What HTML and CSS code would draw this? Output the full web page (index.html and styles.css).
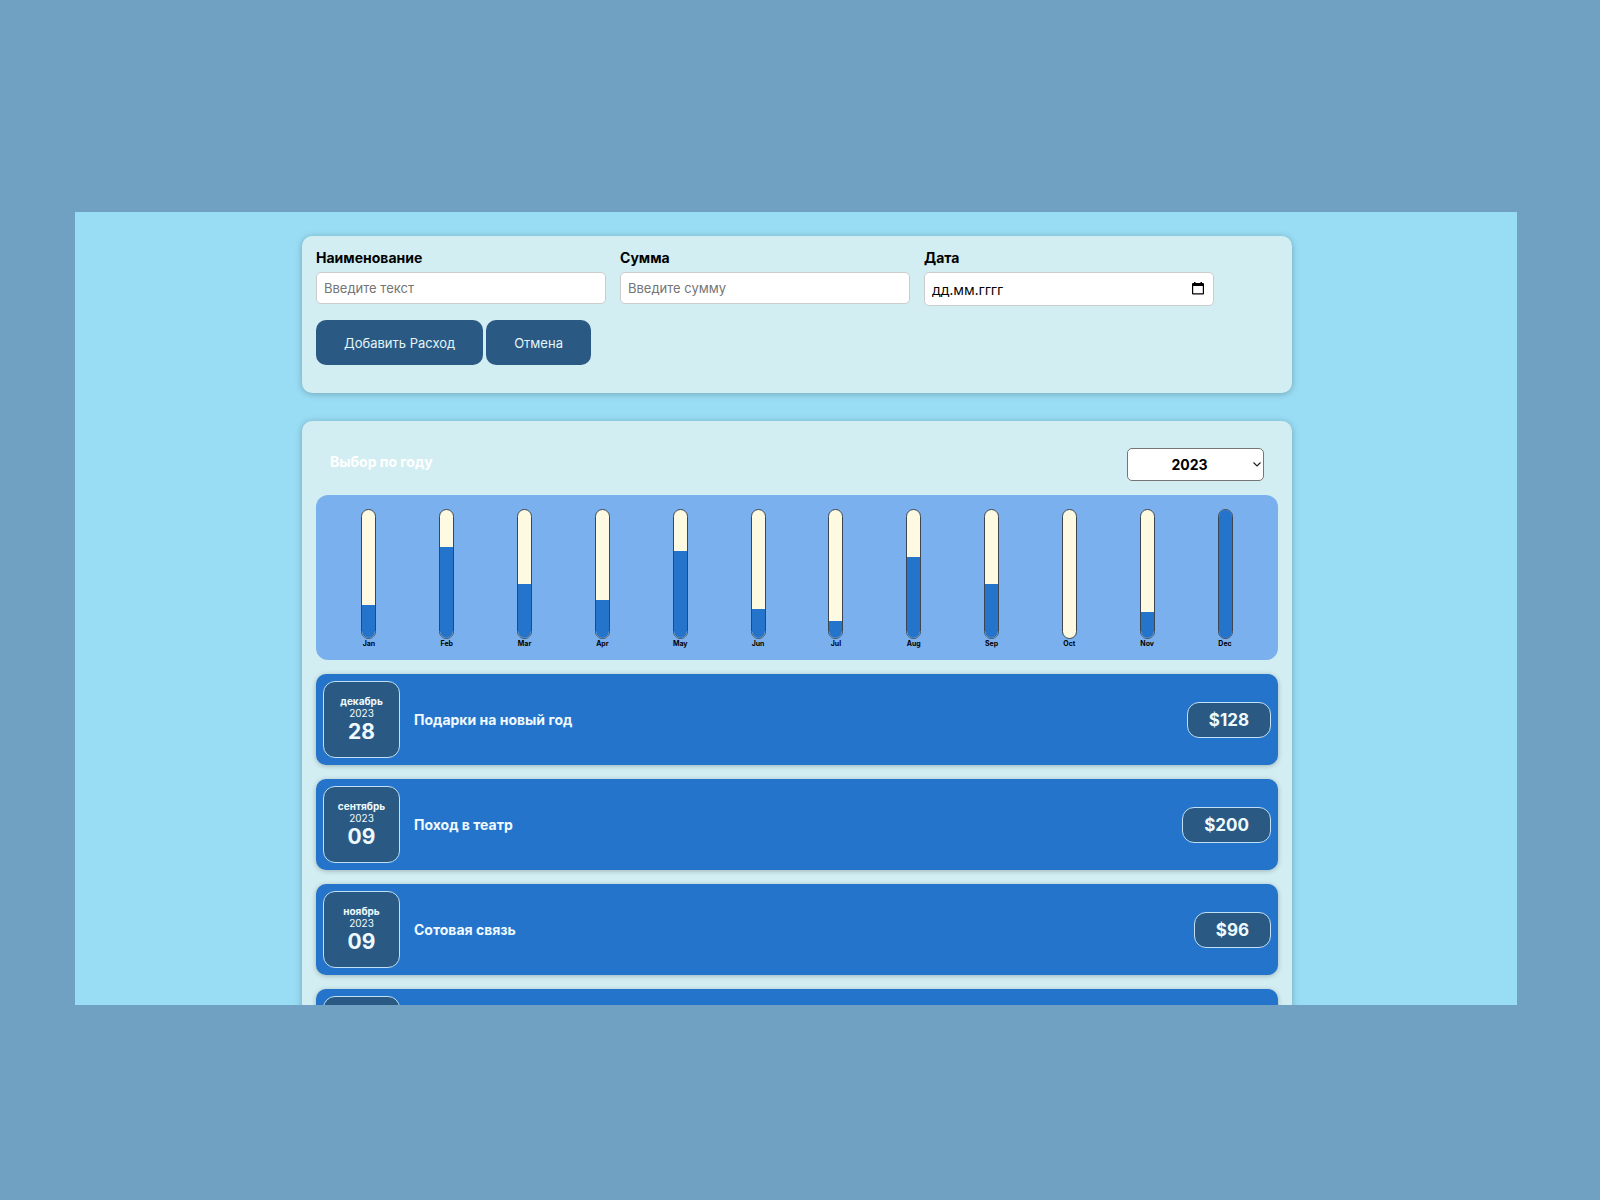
FILE: index.html
```
<!DOCTYPE html>
<html lang="ru">
<head>
  <meta charset="UTF-8">
  <title>Расходы</title>
  <link rel="stylesheet" href="styles.css">
</head>
<body>
  <div class="app">
    <form class="card new-cost">
      <div class="new-cost-controls">
        <div class="control">
          <label for="name">Наименование</label>
          <input type="text" id="name" placeholder="Введите текст">
        </div>
        <div class="control">
          <label for="amount">Сумма</label>
          <input type="text" id="amount" placeholder="Введите сумму">
        </div>
        <div class="control">
          <label for="date">Дата</label>
          <div class="date-field">
            <input type="text" id="date" class="date-input" placeholder="дд.мм.гггг">
            <svg class="calendar" viewBox="0 0 12 13" width="12" height="13">
              <path d="M2 0h1.500v1h5V0H10v1h1a1 1 0 0 1 1 1v9.500a1 1 0 0 1-1 1H1a1 1 0 0 1-1-1V2a1 1 0 0 1 1-1h1zM1.200 4v7.300h9.600V4z"/>
            </svg>
          </div>
        </div>
      </div>
      <div class="actions">
        <button type="submit">Добавить Расход</button>
        <button type="button">Отмена</button>
      </div>
    </form>

    <div class="card costs">
      <div class="filter">
        <label for="year">Выбор по году</label>
        <div class="select-field">
          <select id="year">
            <option>2024</option>
            <option selected>2023</option>
            <option>2022</option>
            <option>2021</option>
          </select>
          <svg class="arrow" viewBox="0 0 8 5" width="8" height="5">
            <path d="M.5.500l3.500 3.500 3.500-3.500" fill="none" stroke="#222" stroke-width="1.200"/>
          </svg>
        </div>
      </div>

      <div class="diagram">
        <div class="bar"><div class="bar-inner"><div class="bar-fill" style="height: 26%"></div></div><div class="bar-label">Jan</div></div>
        <div class="bar"><div class="bar-inner"><div class="bar-fill" style="height: 71%"></div></div><div class="bar-label">Feb</div></div>
        <div class="bar"><div class="bar-inner"><div class="bar-fill" style="height: 42%"></div></div><div class="bar-label">Mar</div></div>
        <div class="bar"><div class="bar-inner"><div class="bar-fill" style="height: 30%"></div></div><div class="bar-label">Apr</div></div>
        <div class="bar"><div class="bar-inner"><div class="bar-fill" style="height: 68%"></div></div><div class="bar-label">May</div></div>
        <div class="bar"><div class="bar-inner"><div class="bar-fill" style="height: 23%"></div></div><div class="bar-label">Jun</div></div>
        <div class="bar"><div class="bar-inner"><div class="bar-fill" style="height: 13%"></div></div><div class="bar-label">Jul</div></div>
        <div class="bar"><div class="bar-inner"><div class="bar-fill" style="height: 63%"></div></div><div class="bar-label">Aug</div></div>
        <div class="bar"><div class="bar-inner"><div class="bar-fill" style="height: 42%"></div></div><div class="bar-label">Sep</div></div>
        <div class="bar"><div class="bar-inner"><div class="bar-fill" style="height: 0%"></div></div><div class="bar-label">Oct</div></div>
        <div class="bar"><div class="bar-inner"><div class="bar-fill" style="height: 20%"></div></div><div class="bar-label">Nov</div></div>
        <div class="bar"><div class="bar-inner"><div class="bar-fill" style="height: 100%"></div></div><div class="bar-label">Dec</div></div>
      </div>

      <ul class="cost-list">
        <li class="cost-item">
          <div class="cost-date">
            <div class="month">декабрь</div>
            <div class="year">2023</div>
            <div class="day">28</div>
          </div>
          <h2>Подарки на новый год</h2>
          <div class="price">$128</div>
        </li>
        <li class="cost-item">
          <div class="cost-date">
            <div class="month">сентябрь</div>
            <div class="year">2023</div>
            <div class="day">09</div>
          </div>
          <h2>Поход в театр</h2>
          <div class="price">$200</div>
        </li>
        <li class="cost-item">
          <div class="cost-date">
            <div class="month">ноябрь</div>
            <div class="year">2023</div>
            <div class="day">09</div>
          </div>
          <h2>Сотовая связь</h2>
          <div class="price">$96</div>
        </li>
        <li class="cost-item">
          <div class="cost-date"></div>
        </li>
      </ul>
    </div>
  </div>
</body>
</html>
```

FILE: styles.css
```
* { box-sizing: border-box; }
body {
  margin: 0;
  height: 100vh;
  padding: 212px 83px 195px 75px;
  background: #71a1c2;
  font-family: Inter, "Noto Sans", sans-serif;
  font-size: 14px;
}
input, select, button { font: inherit; }

.app { height: 100%; padding: 24px 225px 0 227px; background: #99ddf4; overflow: hidden; }
.card {
  padding: 13px 14px 14px;
  margin-bottom: 28px;
  background: #d2eef2;
  border-radius: 10px;
  box-shadow: 0 1px 7px rgba(0, 0, 0, 0.25);
}

/* form */
.new-cost { padding-bottom: 28px; }
.new-cost-controls { display: flex; gap: 14px; margin-bottom: 14px; }
.control { width: 290px; }
.control label { display: block; margin-bottom: 6px; font-weight: bold; line-height: 17px; }
.control input {
  display: block;
  width: 100%;
  height: 32px;
  padding: 0 7px;
  border: 1px solid #ccc;
  border-radius: 5px;
  background: #fff;
  font-size: 13px;
}
.control input::placeholder { color: #757575; }
.date-field { position: relative; }
.control .date-input { height: 34px; font-family: "Noto Sans", sans-serif; font-size: 14px; }
.control .date-input::placeholder { color: #000; }
.calendar { position: absolute; top: 10px; right: 10px; }
.actions { display: flex; gap: 3px; }
.actions button {
  height: 45px;
  padding: 0 28px;
  border: none;
  border-radius: 10px;
  background: #2a5a84;
  color: #e4f5fa;
  font-size: 13px;
  cursor: pointer;
}

/* year filter */
.filter { display: flex; justify-content: space-between; align-items: center; padding: 14px; }
.filter label { color: #fff; font-weight: bold; line-height: 17px; margin-bottom: 7px; }
.select-field { position: relative; }
.filter select {
  display: block;
  width: 137px;
  height: 33px;
  padding: 0 12px 0 0;
  border: 1px solid #767676;
  border-radius: 5px;
  background-color: #fff;
  color: #000;
  font-weight: bold;
  text-align: center;
  appearance: none;
}
.arrow { position: absolute; top: 14px; right: 3px; pointer-events: none; }

/* diagram */
.diagram {
  display: flex;
  justify-content: space-around;
  height: 165px;
  padding: 14px;
  border-radius: 12px;
  background: #7ab0ed;
}
.bar { display: flex; flex: 1; flex-direction: column; align-items: center; }
.bar-inner {
  display: flex;
  flex-direction: column;
  flex-shrink: 0;
  justify-content: flex-end;
  width: 15px;
  height: 130px;
  border: 1px solid #3c4650;
  border-radius: 8px;
  background: #fefae2;
  overflow: hidden;
}
.bar-fill { background: #2574cc; }
.bar-label { font-size: 7px; font-weight: bold; line-height: 9px; }

/* list */
.cost-list { list-style: none; margin: 14px 0 0; padding: 0; }
.cost-item {
  display: flex;
  align-items: center;
  gap: 14px;
  padding: 7px;
  margin-bottom: 14px;
  border-radius: 10px;
  background: #2574cc;
  color: #effaff;
  box-shadow: 0 1px 5px rgba(0, 0, 0, 0.25);
}
.cost-item h2 { flex: 1; margin: 0; font-size: 14px; }
.cost-date {
  display: flex;
  flex-direction: column;
  align-items: center;
  justify-content: center;
  width: 77px;
  height: 77px;
  border: 1px solid #bfe0f5;
  border-radius: 12px;
  background: #2a5a84;
}
.month { font-size: 10px; font-weight: bold; line-height: 12px; }
.year { font-size: 10px; line-height: 12px; }
.day { font-size: 21px; font-weight: bold; line-height: 25px; }
.price {
  padding: 7px 21px;
  border: 1px solid #bfe0f5;
  border-radius: 12px;
  background: #2a5a84;
  font-size: 17px;
  font-weight: bold;
  line-height: 20px;
}
```
